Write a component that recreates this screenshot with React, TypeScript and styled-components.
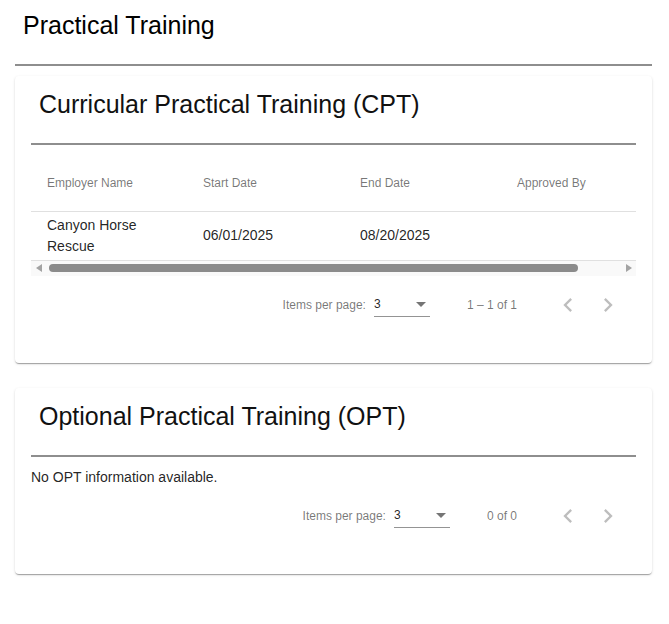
import styled, { createGlobalStyle } from "styled-components";

const GlobalStyle = createGlobalStyle`
  * { box-sizing: border-box; }
  body {
    margin: 0;
    background: #fff;
    font-family: "Liberation Sans", Arial, sans-serif;
    color: rgba(0, 0, 0, 0.87);
  }
`

const Page = styled.div`
  padding: 11px 17px 40px 15px;
`

const PageTitle = styled.h1`
  margin: 0 0 0 8px;
  font-size: 25px;
  font-weight: 400;
  line-height: 28px;
  color: #000;
`

const Rule = styled.hr`
  height: 0;
  margin: 25px 0 10px;
  border: 0;
  border-top: 2px solid #8e8e8e;
`

const Card = styled.section`
  background: #fff;
  border-radius: 4px;
  padding: 14px 16px 31px;
  margin-bottom: 25px;
  box-shadow: 0 2px 1px -1px rgba(0, 0, 0, 0.2), 0 1px 1px 0 rgba(0, 0, 0, 0.14),
    0 1px 3px 0 rgba(0, 0, 0, 0.12);
`

const CardTitle = styled.h2`
  margin: 0 0 0 8px;
  font-size: 25px;
  font-weight: 400;
  line-height: 28px;
  color: #111;
`

const TableViewport = styled.div`
  overflow: hidden;
`

const Table = styled.table`
  width: 650px;
  table-layout: fixed;
  border-collapse: collapse;
`

const HeadCell = styled.th<{ $w: number }>`
  width: ${(p) => p.$w}px;
  height: 56px;
  padding: 0 16px;
  text-align: left;
  font-size: 12px;
  font-weight: 400;
  color: rgba(0, 0, 0, 0.54);
  border-bottom: 1px solid rgba(0, 0, 0, 0.12);
`

const Cell = styled.td`
  padding: 3px 16px;
  font-size: 14px;
  line-height: 21px;
  color: rgba(0, 0, 0, 0.87);
  vertical-align: middle;
  border-bottom: 1px solid rgba(0, 0, 0, 0.12);
`

const ScrollBar = styled.div`
  display: flex;
  height: 15px;
  background: #f9f9f9;
`

const ScrollButton = styled.div`
  width: 15px;
  display: flex;
  align-items: center;
  justify-content: center;
`

const Arrow = styled.span<{ $dir: "left" | "right" }>`
  width: 0;
  height: 0;
  border-top: 4px solid transparent;
  border-bottom: 4px solid transparent;
  ${(p) =>
    p.$dir === "left"
      ? "border-right: 6px solid #a3a3a3;"
      : "border-left: 6px solid #a3a3a3;"}
`

const ScrollTrack = styled.div`
  flex: 1;
  display: flex;
  align-items: center;
  padding: 0 3px;
`

const Thumb = styled.div<{ $ratio: number }>`
  width: ${(p) => p.$ratio * 100}%;
  height: 8px;
  border-radius: 4px;
  background: #8b8b8b;
`

const Paginator = styled.div`
  display: flex;
  justify-content: flex-end;
  align-items: center;
  min-height: 56px;
  padding: 2px 8px 0;
  font-size: 12px;
  line-height: 16px;
  color: rgba(0, 0, 0, 0.54);
`

const PageSizeLabel = styled.span`
  margin: 0 4px;
`

const Select = styled.div`
  width: 56px;
  margin: 0 4px;
  display: flex;
  align-items: center;
  justify-content: space-between;
  padding: 4px 4px 4px 0;
  border-bottom: 1px solid rgba(0, 0, 0, 0.42);
  color: rgba(0, 0, 0, 0.87);
`

const Caret = styled.span`
  width: 0;
  height: 0;
  border-left: 5px solid transparent;
  border-right: 5px solid transparent;
  border-top: 5px solid rgba(0, 0, 0, 0.54);
`

const RangeLabel = styled.span`
  margin: 0 31px 0 33px;
`

const NavButton = styled.button`
  width: 40px;
  height: 40px;
  padding: 0;
  border: 0;
  background: none;
  display: flex;
  align-items: center;
  justify-content: center;
  color: rgba(0, 0, 0, 0.26);
`

const EmptyText = styled.p`
  margin: 0;
  font-size: 14px;
  line-height: 20px;
  color: rgba(0, 0, 0, 0.87);
`

const Chevron = ({ next }: { next?: boolean }) => (
  <svg width="28" height="28" viewBox="0 0 24 24" fill="currentColor">
    <path d={next ? "M10 6L8.59 7.41 13.17 12l-4.58 4.59L10 18l6-6z" : "M15.41 7.41L14 6l-6 6 6 6 1.41-1.41L10.83 12z"} />
  </svg>
)

const Pager = ({ range }: { range: string }) => (
  <Paginator>
    <PageSizeLabel>Items per page:</PageSizeLabel>
    <Select>
      <span>3</span>
      <Caret />
    </Select>
    <RangeLabel>{range}</RangeLabel>
    <NavButton disabled aria-label="Previous page">
      <Chevron />
    </NavButton>
    <NavButton disabled aria-label="Next page">
      <Chevron next />
    </NavButton>
  </Paginator>
)

const columns = [
  { label: "Employer Name", w: 156 },
  { label: "Start Date", w: 157 },
  { label: "End Date", w: 157 },
  { label: "Approved By", w: 180 },
]

const cptRows = [
  { employer: "Canyon Horse Rescue", start: "06/01/2025", end: "08/20/2025", approvedBy: "" },
]

export default function App() {
  return (
    <>
      <GlobalStyle />
      <Page>
        <PageTitle>Practical Training</PageTitle>
        <Rule />

        <Card>
          <CardTitle>Curricular Practical Training (CPT)</CardTitle>
          <Rule />
          <TableViewport>
            <Table>
              <thead>
                <tr>
                  {columns.map((c) => (
                    <HeadCell key={c.label} $w={c.w}>
                      {c.label}
                    </HeadCell>
                  ))}
                </tr>
              </thead>
              <tbody>
                {cptRows.map((r) => (
                  <tr key={r.employer}>
                    <Cell>{r.employer}</Cell>
                    <Cell>{r.start}</Cell>
                    <Cell>{r.end}</Cell>
                    <Cell>{r.approvedBy}</Cell>
                  </tr>
                ))}
              </tbody>
            </Table>
          </TableViewport>
          <ScrollBar>
            <ScrollButton>
              <Arrow $dir="left" />
            </ScrollButton>
            <ScrollTrack>
              <Thumb $ratio={0.93} />
            </ScrollTrack>
            <ScrollButton>
              <Arrow $dir="right" />
            </ScrollButton>
          </ScrollBar>
          <Pager range="1 – 1 of 1" />
        </Card>

        <Card>
          <CardTitle>Optional Practical Training (OPT)</CardTitle>
          <Rule />
          <EmptyText>No OPT information available.</EmptyText>
          <Pager range="0 of 0" />
        </Card>
      </Page>
    </>
  )
}
